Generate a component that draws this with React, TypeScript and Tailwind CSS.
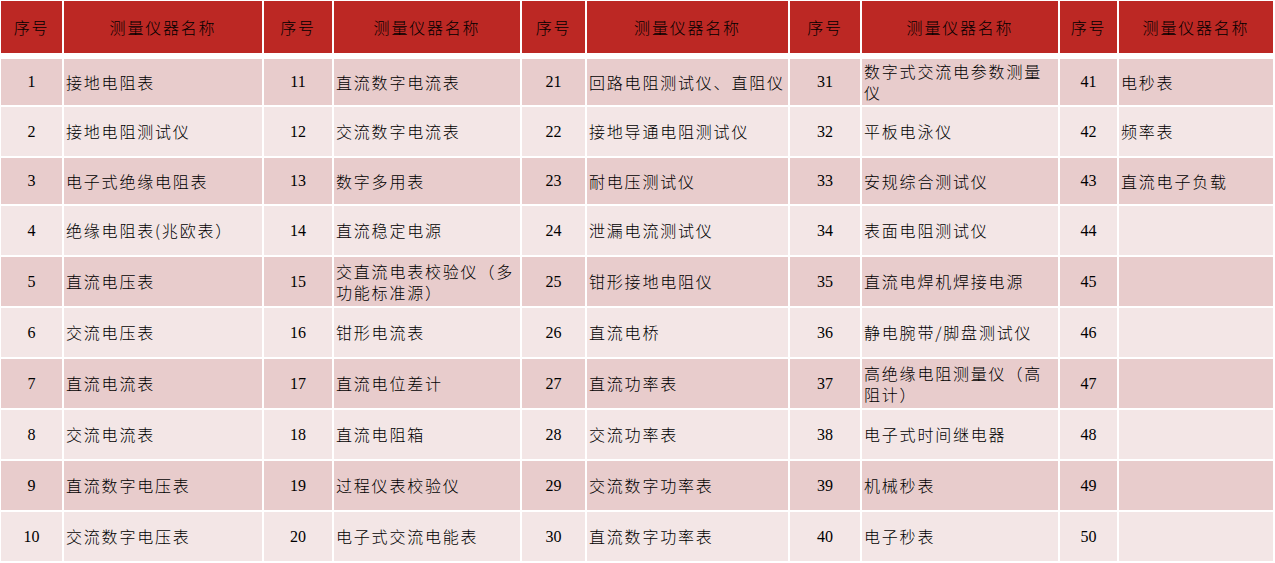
import React from 'react';

const cols = 'grid-cols-[61px_198px_68px_186px_63px_201px_70px_196px_57px_154px]';

const names: string[][] = [
  ['接地电阻表','接地电阻测试仪','电子式绝缘电阻表','绝缘电阻表(兆欧表）','直流电压表','交流电压表','直流电流表','交流电流表','直流数字电压表','交流数字电压表'],
  ['直流数字电流表','交流数字电流表','数字多用表','直流稳定电源','交直流电表校验仪（多功能标准源）','钳形电流表','直流电位差计','直流电阻箱','过程仪表校验仪','电子式交流电能表'],
  ['回路电阻测试仪、直阻仪','接地导通电阻测试仪','耐电压测试仪','泄漏电流测试仪','钳形接地电阻仪','直流电桥','直流功率表','交流功率表','交流数字功率表','直流数字功率表'],
  ['数字式交流电参数测量仪','平板电泳仪','安规综合测试仪','表面电阻测试仪','直流电焊机焊接电源','静电腕带/脚盘测试仪','高绝缘电阻测量仪（高阻计）','电子式时间继电器','机械秒表','电子秒表'],
  ['电秒表','频率表','直流电子负载','','','','','','',''],
];

const cjk = "font-['Noto_Sans_CJK_SC',sans-serif] font-light";
const num = "font-['Liberation_Serif','Noto_Sans_CJK_SC',serif]";

export default function App() {
  return (
    <div className="w-[1275px] h-[563px] bg-white pl-[1px] pt-[1px] text-black">
      {/* header */}
      <div className={`grid ${cols} gap-x-[2px] h-[52px]`}>
        {Array.from({ length: 5 }).map((_, g) => (
          <React.Fragment key={g}>
            <div className={`bg-[#bc2824] flex items-center justify-center text-[16px] tracking-[1.8px] ${cjk}`}>序号</div>
            <div className={`bg-[#bc2824] flex items-center justify-center text-[16px] tracking-[1.8px] ${cjk}`}>测量仪器名称</div>
          </React.Fragment>
        ))}
      </div>

      {/* body */}
      <div className={`grid ${cols} grid-rows-[46px_49px_46px_49px_49px_49px_49px_49px_49px_49px] gap-[2px] mt-[6px]`}>
        {Array.from({ length: 10 }).map((_, r) => {
          const bg = r % 2 === 0 ? 'bg-[#e8cccc]' : 'bg-[#f3e6e6]';
          return (
            <React.Fragment key={r}>
              {names.map((col, g) => (
                <React.Fragment key={g}>
                  <div className={`${bg} flex items-center justify-center text-[16px] ${num}`}>{g * 10 + r + 1}</div>
                  <div className={`${bg} flex items-center pl-[2px] pr-[2px] text-[16px] leading-[21px] tracking-[1.8px] ${cjk}`}>
                    {col[r]}
                  </div>
                </React.Fragment>
              ))}
            </React.Fragment>
          );
        })}
      </div>
    </div>
  );
}
